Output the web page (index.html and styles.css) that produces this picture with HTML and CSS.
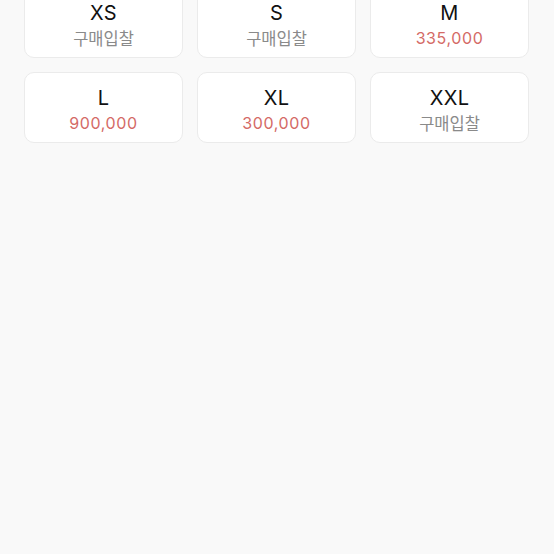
FILE: index.html
```html
<!DOCTYPE html>
<html lang="ko">
<head>
<meta charset="utf-8">
<link rel="stylesheet" href="styles.css">
</head>
<body>
<div class="grid">
  <div class="card"><div class="size">XS</div><div class="sub">구매입찰</div></div>
  <div class="card"><div class="size">S</div><div class="sub">구매입찰</div></div>
  <div class="card"><div class="size">M</div><div class="price">335,000</div></div>
  <div class="card"><div class="size">L</div><div class="price">900,000</div></div>
  <div class="card"><div class="size">XL</div><div class="price">300,000</div></div>
  <div class="card"><div class="size">XXL</div><div class="sub">구매입찰</div></div>
</div>
</body>
</html>
```
FILE: styles.css
```css
html, body {
  margin: 0;
  padding: 0;
  background: #f9f9f9;
  height: 100%;
  overflow: hidden;
}
body {
  font-family: Inter, "Noto Sans CJK KR", sans-serif;
}
.grid {
  display: grid;
  grid-template-columns: repeat(3, 1fr);
  column-gap: 14px;
  row-gap: 14px;
  padding: 0 25px 0 24px;
  margin-top: -13px;
}
.card {
  background: #fff;
  border: 1px solid #ebebeb;
  border-radius: 10px;
  height: 71px;
  box-sizing: border-box;
  display: flex;
  flex-direction: column;
  align-items: center;
  padding-top: 13px;
}
.size {
  font-size: 20px;
  line-height: 24px;
  color: #111;
  letter-spacing: 0.3px;
}
.sub, .price {
  font-size: 16px;
  line-height: 22px;
  margin-top: 2px;
}
.sub {
  color: #8a8a8a;
  font-family: "Noto Sans CJK KR", sans-serif;
  font-size: 16.5px;
}
.price {
  color: #d46a66;
  letter-spacing: 0.6px;
}
```
